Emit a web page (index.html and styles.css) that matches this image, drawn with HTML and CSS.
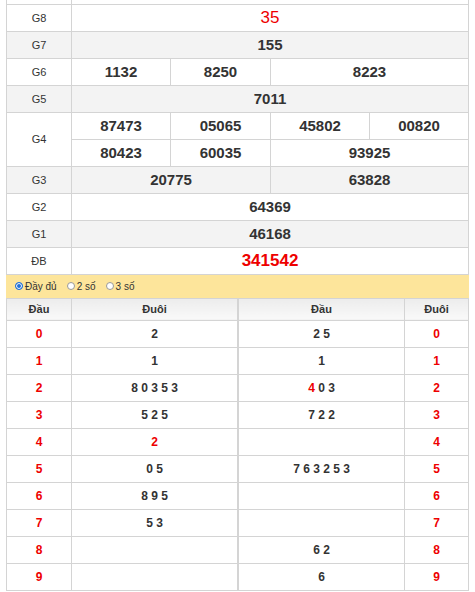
FILE: index.html
```html
<!DOCTYPE html>
<html lang="vi">
<head>
<meta charset="utf-8">
<title>Kết quả xổ số</title>
<link rel="stylesheet" href="styles.css">
</head>
<body>
<div class="wrap">
  <table class="kq">
    <colgroup><col class="c65"><col class="c99"><col class="c100"><col class="c99"><col class="c99"></colgroup>
    <tr class="stub"><td></td><td colspan="4"></td></tr>
    <tr><td class="lbl">G8</td><td colspan="4" class="red g8">35</td></tr>
    <tr class="alt"><td class="lbl">G7</td><td colspan="4">155</td></tr>
    <tr><td class="lbl">G6</td><td>1132</td><td>8250</td><td colspan="2">8223</td></tr>
    <tr class="alt"><td class="lbl">G5</td><td colspan="4">7011</td></tr>
    <tr><td class="lbl" rowspan="2">G4</td><td>87473</td><td>05065</td><td>45802</td><td>00820</td></tr>
    <tr><td>80423</td><td>60035</td><td colspan="2">93925</td></tr>
    <tr class="alt"><td class="lbl">G3</td><td colspan="2">20775</td><td colspan="2">63828</td></tr>
    <tr><td class="lbl">G2</td><td colspan="4">64369</td></tr>
    <tr class="alt"><td class="lbl">G1</td><td colspan="4">46168</td></tr>
    <tr><td class="lbl">ĐB</td><td colspan="4" class="red db">341542</td></tr>
  </table>

  <div class="opts">
    <label class="opt"><input type="radio" name="mode" checked>Đầy đủ</label>
    <label class="opt"><input type="radio" name="mode">2 số</label>
    <label class="opt"><input type="radio" name="mode">3 số</label>
  </div>

  <div class="loto">
    <table class="lt lt-left">
      <colgroup><col class="c65"><col class="c166"></colgroup>
      <tr class="head"><th>Đầu</th><th>Đuôi</th></tr>
      <tr><td class="red">0</td><td>2</td></tr>
      <tr><td class="red">1</td><td>1</td></tr>
      <tr><td class="red">2</td><td>8 0 3 5 3</td></tr>
      <tr><td class="red">3</td><td>5 2 5</td></tr>
      <tr><td class="red">4</td><td><span class="red">2</span></td></tr>
      <tr><td class="red">5</td><td>0 5</td></tr>
      <tr><td class="red">6</td><td>8 9 5</td></tr>
      <tr><td class="red">7</td><td>5 3</td></tr>
      <tr><td class="red">8</td><td></td></tr>
      <tr><td class="red">9</td><td></td></tr>
    </table>
    <table class="lt lt-right">
      <colgroup><col class="c166"><col class="c64"></colgroup>
      <tr class="head"><th>Đầu</th><th>Đuôi</th></tr>
      <tr><td>2 5</td><td class="red">0</td></tr>
      <tr><td>1</td><td class="red">1</td></tr>
      <tr><td><span class="red">4</span> 0 3</td><td class="red">2</td></tr>
      <tr><td>7 2 2</td><td class="red">3</td></tr>
      <tr><td></td><td class="red">4</td></tr>
      <tr><td>7 6 3 2 5 3</td><td class="red">5</td></tr>
      <tr><td></td><td class="red">6</td></tr>
      <tr><td></td><td class="red">7</td></tr>
      <tr><td>6 2</td><td class="red">8</td></tr>
      <tr><td>6</td><td class="red">9</td></tr>
    </table>
  </div>

  <p class="note">Xem thêm kết quả xổ số miền Bắc hôm nay, thống kê lô tô đầu đuôi đầy đủ nhất.</p>
</div>
</body>
</html>
```
FILE: styles.css
```css
* { box-sizing: border-box; }
html, body { margin: 0; padding: 0; background: #fff; }
body {
  font-family: Arial, "Liberation Sans", sans-serif;
  color: #333;
}
.wrap { padding: 0 6px; }

table { border-collapse: collapse; table-layout: fixed; }
.c65 { width: 65px; }
.c64 { width: 64px; }
.c99 { width: 99px; }
.c100 { width: 100px; }
.c166 { width: 166px; }

.kq { width: 463px; }
.kq td {
  border: 1px solid #d4d4d4;
  padding: 0;
  height: 27px;
  text-align: center;
  font-size: 15px;
  font-weight: bold;
  color: #333;
}
.kq .stub td { height: 4px; border-top: 0; }
.kq .alt td { background: #f3f3f3; }
.kq td.lbl { font-size: 11px; font-weight: normal; background: #fff; }
.kq .alt td.lbl { background: #f3f3f3; }
.kq td.g8 { font-size: 17px; font-weight: normal; }
.kq td.db { font-size: 17px; font-weight: bold; }
.red, .kq td.red, .lt td.red { color: #e00; }

.opts {
  display: flex;
  align-items: center;
  height: 23px;
  background: #fde59b;
  padding-left: 9px;
  font-size: 10px;
  color: #333;
}
.opt { display: flex; align-items: center; margin-right: 10px; }
.opt input {
  appearance: none;
  -webkit-appearance: none;
  margin: 0 2px 0 0;
  width: 8px;
  height: 8px;
  border-radius: 50%;
  border: 1px solid #999;
  background: #fff;
}
.opt input:checked {
  border-color: #1f6fd8;
  background: #1f6fd8;
  box-shadow: inset 0 0 0 1px #fff;
}

.loto { display: flex; }
.lt-left { width: 232px; }
.lt-right { width: 231px; }
.lt th, .lt td {
  border: 1px solid #d4d4d4;
  padding: 0;
  text-align: center;
  font-size: 12px;
  font-weight: bold;
  color: #333;
}
.lt td { height: 27px; }
.lt th {
  height: 22px;
  font-size: 11px;
  background: linear-gradient(#ececec, #f9f9f9);
}

.note {
  margin: 2px 0 0;
  padding: 0 10px;
  font-size: 13px;
  line-height: 16px;
  color: #333;
}
```
